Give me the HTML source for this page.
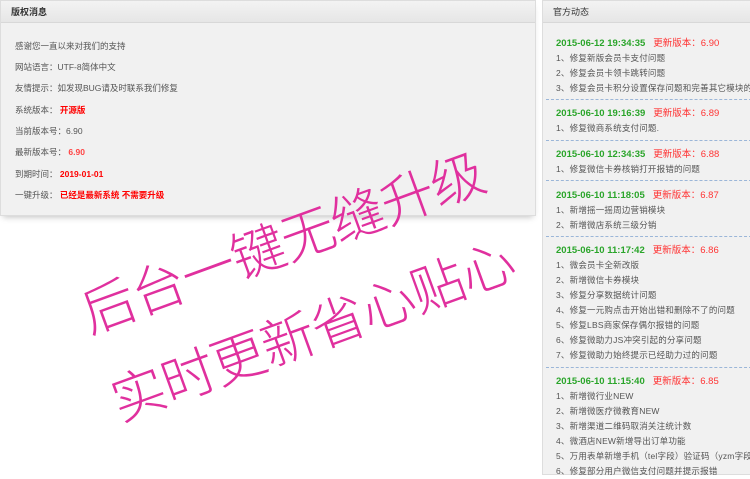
<!DOCTYPE html>
<html><head><meta charset="utf-8"><style>
*{margin:0;padding:0;box-sizing:border-box}
body{width:750px;height:469px;overflow:hidden;background:#fff;font-family:"Liberation Sans","Noto Sans CJK SC",sans-serif;position:relative}
.panel{position:absolute;background:#f1f1f1;border:1px solid #ddd}
.hd{height:22px;background:linear-gradient(#f3f3f3,#e6e6e6);border-bottom:1px solid #d8d8d8;font-size:9px;color:#333;line-height:22px;padding-left:10px;font-weight:bold}
#L{left:0;top:0;width:536px;height:216px;box-shadow:0 4px 6px -3px rgba(0,0,0,.25)}
#L .row{position:absolute;left:14px;font-size:8.5px;color:#555}
.red{color:#f00;font-weight:bold}
#R{left:542px;top:0;width:212px;height:475px}
#R .hd{font-weight:normal}
.e{position:absolute;left:13px;width:200px;white-space:nowrap;overflow:hidden}
.d{font-size:9.5px;color:#2aa52a;font-weight:bold;height:15px;line-height:15px}
.d span{color:#f33;font-weight:normal;margin-left:8px}
.i{font-size:8.5px;color:#555;height:15px;line-height:15px;letter-spacing:.2px}
.sep{position:absolute;left:3px;width:206px;border-top:1px dashed #9bb6d8}
.w{position:absolute;font-family:"Noto Sans CJK SC",sans-serif;font-weight:300;color:#e0309e;font-size:54px;white-space:nowrap;transform-origin:0 50%;transform:rotate(-20deg);letter-spacing:-1px}
</style></head><body>
<div class="panel" id="L"><div class="hd">版权消息</div>
<div class="row" style="top:39px">感谢您一直以来对我们的支持</div>
<div class="row" style="top:60px">网站语言：UTF-8简体中文</div>
<div class="row" style="top:81px">友情提示：如发现BUG请及时联系我们修复</div>
<div class="row" style="top:103px">系统版本： <span class="red">开源版</span></div>
<div class="row" style="top:124px">当前版本号：6.90</div>
<div class="row" style="top:145px">最新版本号： <span class="red" style="color:#f44">6.90</span></div>
<div class="row" style="top:167px">到期时间： <span class="red">2019-01-01</span></div>
<div class="row" style="top:188px">一键升级： <span class="red">已经是最新系统 不需要升级</span></div>
</div>
<div class="panel" id="R"><div class="hd">官方动态</div>
<div class="e" style="top:35px"><div class="d">2015-06-12 19:34:35<span>更新版本：6.90</span></div><div class="i">1、修复新版会员卡支付问题</div><div class="i">2、修复会员卡领卡跳转问题</div><div class="i">3、修复会员卡积分设置保存问题和完善其它模块的一些问题</div></div>
<div class="sep" style="top:98px"></div>
<div class="e" style="top:105px"><div class="d">2015-06-10 19:16:39<span>更新版本：6.89</span></div><div class="i">1、修复微商系统支付问题.</div></div>
<div class="sep" style="top:139px"></div>
<div class="e" style="top:146px"><div class="d">2015-06-10 12:34:35<span>更新版本：6.88</span></div><div class="i">1、修复微信卡券核销打开报错的问题</div></div>
<div class="sep" style="top:179px"></div>
<div class="e" style="top:187px"><div class="d">2015-06-10 11:18:05<span>更新版本：6.87</span></div><div class="i">1、新增摇一摇周边营销模块</div><div class="i">2、新增微店系统三级分销</div></div>
<div class="sep" style="top:235px"></div>
<div class="e" style="top:242px"><div class="d">2015-06-10 11:17:42<span>更新版本：6.86</span></div><div class="i">1、微会员卡全新改版</div><div class="i">2、新增微信卡券模块</div><div class="i">3、修复分享数据统计问题</div><div class="i">4、修复一元购点击开始出错和删除不了的问题</div><div class="i">5、修复LBS商家保存偶尔报错的问题</div><div class="i">6、修复微助力JS冲突引起的分享问题</div><div class="i">7、修复微助力始终提示已经助力过的问题</div></div>
<div class="sep" style="top:366px"></div>
<div class="e" style="top:373px"><div class="d">2015-06-10 11:15:40<span>更新版本：6.85</span></div><div class="i">1、新增微行业NEW</div><div class="i">2、新增微医疗微教育NEW</div><div class="i">3、新增渠道二维码取消关注统计数</div><div class="i">4、微酒店NEW新增导出订单功能</div><div class="i">5、万用表单新增手机（tel字段）验证码（yzm字段）</div><div class="i">6、修复部分用户微信支付问题并提示报错</div></div>
</div>
<div class="w" style="left:82px;top:272px">后台一键无缝升级</div>
<div class="w" style="left:112px;top:360px">实时更新省心贴心</div>
</body></html>
